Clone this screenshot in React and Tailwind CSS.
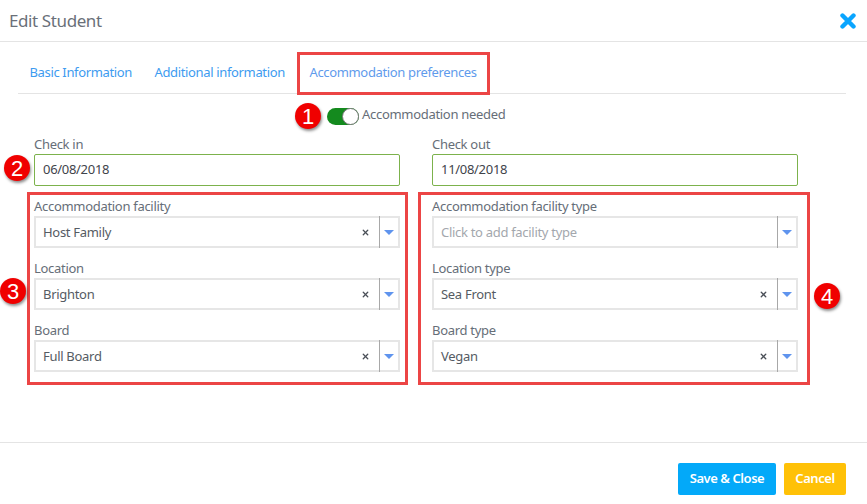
import { X } from 'lucide-react';

function Field({ label, value, placeholder, clear = true }) {
  return (
    <div className="mb-[10px]">
      <label className="block h-5 text-[13px] leading-5 tracking-[-0.3px] text-[#666e78]">{label}</label>
      <div className="flex h-8 items-center border-2 border-[#e6e6e6] bg-white">
        <span className={`flex-1 pl-[7px] pt-[1px] text-[13px] tracking-[-0.3px] ${placeholder ? 'text-[#a3a7ad]' : 'text-[#555b63]'}`}>
          {value || placeholder}
        </span>
        {clear && <X className="mr-[9px] h-[9px] w-[9px] text-[#4a4f57]" strokeWidth={3.5} />}
        <div className="-my-[2px] flex h-8 w-[19px] items-center justify-center border-l border-[#a8a8a8]">
          <div className="h-0 w-0 border-x-[5px] border-t-[5px] border-x-transparent border-t-[#5f94ee]" />
        </div>
      </div>
    </div>
  );
}

function DateField({ label, value }) {
  return (
    <div className="mb-[10px]">
      <label className="block h-5 text-[13px] leading-5 tracking-[-0.3px] text-[#666e78]">{label}</label>
      <div className="flex h-8 items-center rounded-[2px] border border-[#7cb24c] pl-2 text-[13px] tracking-[-0.3px] text-[#3f444b]">
        {value}
      </div>
    </div>
  );
}

function Badge({ n, className }) {
  return (
    <div className={`absolute flex h-[26px] w-[26px] items-center justify-center rounded-full bg-[#f00000] font-['Liberation_Sans',sans-serif] text-[22px] text-white shadow-[1px_2px_3px_rgba(0,0,0,0.45)] ${className}`}>
      {n}
    </div>
  );
}

export default function App() {
  return (
    <div className="relative h-[504px] w-[867px] overflow-hidden bg-white font-['Noto_Sans',sans-serif]">
      <div className="flex h-[42px] items-center justify-between border-b border-[#e4e4e4] pl-[9px] pr-[11px]">
        <h1 className="text-[17px] tracking-[-0.4px] text-[#6a7079]">Edit Student</h1>
        <svg width="16" height="16" viewBox="0 0 16 16">
          <path d="M2.5 2.5 13.5 13.5M13.5 2.5 2.5 13.5" stroke="#0aa5ff" strokeWidth="4.4" strokeLinecap="round" />
        </svg>
      </div>

      <div className="ml-[18px] mr-[21px] mt-[10px] flex h-[42px] items-center border-b border-[#e4e4e4] text-[13px] tracking-[-0.35px] text-[#3d9bf0]">
        <span className="ml-[11.5px] w-[125px]">Basic Information</span>
        <span className="w-[155px]">Additional information</span>
        <span className="text-[#5f9bec]">Accommodation preferences</span>
      </div>

      <div className="mt-[12px] flex h-[18px] items-center pl-[327px]">
        <div className="relative mt-[2px] h-[17px] w-[32px] rounded-full bg-[#148a1e]">
          <div className="absolute right-0 top-0 h-[17px] w-[17px] rounded-full border border-[#777] bg-white" />
        </div>
        <span className="ml-[3px] text-[13px] tracking-[-0.3px] text-[#666e78]">Accommodation needed</span>
      </div>

      <div className="mt-[10px] grid w-[798px] grid-cols-2 gap-x-[32px] pl-[34px]">
        <DateField label="Check in" value="06/08/2018" />
        <DateField label="Check out" value="11/08/2018" />
        <Field label="Accommodation facility" value="Host Family" />
        <Field label="Accommodation facility type" placeholder="Click to add facility type" clear={false} />
        <Field label="Location" value="Brighton" />
        <Field label="Location type" value="Sea Front" />
        <Field label="Board" value="Full Board" />
        <Field label="Board type" value="Vegan" />
      </div>

      <div className="absolute bottom-0 left-0 right-0 flex h-[62px] items-start justify-end gap-2 border-t border-[#e4e4e4] pr-[21px] pt-5">
        <button className="h-8 w-[98px] rounded-[2px] bg-[#03a9f9] text-[13px] font-semibold tracking-[-0.45px] text-white">Save &amp; Close</button>
        <button className="h-8 w-[62px] rounded-[2px] bg-[#ffc107] text-[13px] font-semibold tracking-[-0.45px] text-white">Cancel</button>
      </div>

      {/* red annotation boxes over the screenshot */}
      <div className="absolute left-[297px] top-[52px] h-[43px] w-[193px] border-[3px] border-[#ec4545]" />
      <div className="absolute left-[27px] top-[192px] h-[193px] w-[381px] border-[3px] border-[#ec4545]" />
      <div className="absolute left-[418px] top-[192px] h-[193px] w-[392px] border-[3px] border-[#ec4545]" />
      <Badge n="1" className="left-[295px] top-[103px]" />
      <Badge n="2" className="left-[4px] top-[155px]" />
      <Badge n="3" className="left-0 top-[278px]" />
      <Badge n="4" className="left-[814px] top-[283px]" />
    </div>
  );
}
